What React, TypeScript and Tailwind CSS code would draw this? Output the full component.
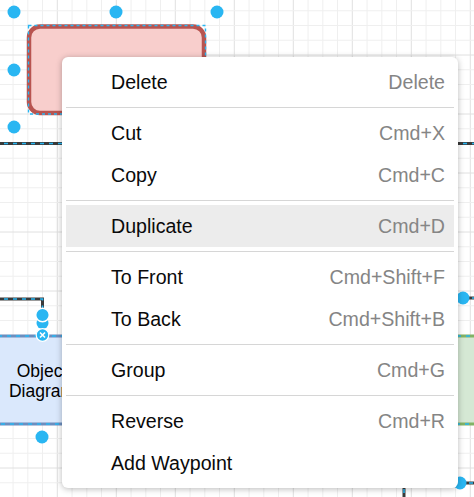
import React from 'react'

type Item = { label: string; shortcut?: string; active?: boolean }

const groups: Item[][] = [
  [{ label: 'Delete', shortcut: 'Delete' }],
  [
    { label: 'Cut', shortcut: 'Cmd+X' },
    { label: 'Copy', shortcut: 'Cmd+C' },
  ],
  [{ label: 'Duplicate', shortcut: 'Cmd+D', active: true }],
  [
    { label: 'To Front', shortcut: 'Cmd+Shift+F' },
    { label: 'To Back', shortcut: 'Cmd+Shift+B' },
  ],
  [{ label: 'Group', shortcut: 'Cmd+G' }],
  [
    { label: 'Reverse', shortcut: 'Cmd+R' },
    { label: 'Add Waypoint' },
  ],
]

const BLUE = '#29b6f2'

function Handle({ x, y }: { x: number; y: number }) {
  return <circle cx={x} cy={y} r={6.5} fill={BLUE} />
}

// dark edge with the blue dashed selection overlay
function Edge({ d }: { d: string }) {
  return (
    <g fill="none">
      <path d={d} stroke="#3a3a3a" strokeWidth={3} />
      <path d={d} stroke={BLUE} strokeWidth={1.6} strokeDasharray="4 5" />
    </g>
  )
}

function Canvas() {
  const minor = 14.75
  const lines: React.ReactNode[] = []
  for (let k = -4; k < 34; k++) {
    const x = 57.3 + k * minor
    const major = k % 4 === 0
    lines.push(
      <line key={'v' + k} x1={x} y1={0} x2={x} y2={497} stroke={major ? '#e0e0e0' : '#efefef'} strokeWidth={1} />
    )
  }
  for (let k = -4; k < 34; k++) {
    const y = 55 + k * minor
    const major = k % 4 === 0
    lines.push(
      <line key={'h' + k} x1={0} y1={y} x2={474} y2={y} stroke={major ? '#e0e0e0' : '#efefef'} strokeWidth={1} />
    )
  }

  return (
    <svg className="absolute inset-0" width={474} height={497} viewBox="0 0 474 497">
      <rect width={474} height={497} fill="#ffffff" />
      {lines}

      {/* pink shape, selected */}
      <rect x={29} y={26.5} width={175} height={86.5} rx={11} fill="#f8cecc" stroke="#b85450" strokeWidth={4.5} />
      <rect x={28.5} y={25.5} width={177} height={88.5} fill="none" stroke={BLUE} strokeWidth={1.4} strokeDasharray="3 3" />
      <Handle x={14} y={12} />
      <Handle x={116} y={12} />
      <Handle x={217} y={12} />
      <Handle x={14} y={70} />
      <Handle x={14} y={127} />
      <Handle x={116} y={127} />
      <Handle x={217} y={127} />

      <Edge d="M -5 143.5 H 480" />

      {/* left connector */}
      <Edge d="M -5 299 H 42.5 V 310" />

      {/* blue shape */}
      <rect x={-20} y={336} width={126} height={88} fill="#dae8fc" stroke="#6c8ebf" strokeWidth={3} />
      <rect x={-20} y={336} width={126} height={88} fill="none" stroke={BLUE} strokeWidth={1.6} strokeDasharray="4 5" />
      <text x={42} y={377} textAnchor="middle" fontFamily="'Liberation Sans', Arial, sans-serif" fontSize={17.5} fill="#000">
        Object
      </text>
      <text x={42} y={397} textAnchor="middle" fontFamily="'Liberation Sans', Arial, sans-serif" fontSize={17.5} fill="#000">
        Diagram
      </text>
      <circle cx={42.5} cy={323} r={6} fill={BLUE} />
      <circle cx={42.5} cy={315} r={6.8} fill={BLUE} stroke="#ffffff" strokeWidth={1.5} />
      <circle cx={42.5} cy={335} r={6.3} fill={BLUE} stroke="#ffffff" strokeWidth={1.2} />
      <path d="M 40 332.5 L 45 337.5 M 45 332.5 L 40 337.5" stroke="#ffffff" strokeWidth={1.6} />
      <Handle x={42} y={437} />

      {/* green shape */}
      <rect x={430} y={336} width={70} height={88} fill="#d5e8d4" stroke="#82b366" strokeWidth={3} />
      <rect x={430} y={336} width={70} height={88} fill="none" stroke={BLUE} strokeWidth={1.6} strokeDasharray="4 5" />
      <Edge d="M 463 298 H 480" />
      <Handle x={463} y={298} />
      <Edge d="M 460 483 H 480" />
      <Handle x={460} y={483} />
      <Edge d="M 404 480 V 500" />
    </svg>
  )
}

export default function App() {
  return (
    <div className="relative w-[474px] h-[497px] overflow-hidden bg-white font-['Liberation_Sans',Arial,sans-serif]">
      <Canvas />

      <div className="absolute left-[62px] top-[57px] w-[396px] rounded-[6px] bg-white py-[4px] shadow-[0_1px_6px_rgba(0,0,0,0.28)]">
        {groups.map((group, gi) => (
          <div key={gi}>
            {gi > 0 && <div className="mx-[4px] my-[4px] h-px bg-[#d6d6d6]" />}
            {group.map((item) => (
              <div
                key={item.label}
                className={
                  'mx-[4px] flex h-[42px] items-center justify-between pl-[45px] pr-[9px] pt-[2px] text-[19.6px] ' +
                  (item.active ? 'bg-[#ececec]' : '')
                }
              >
                <span className="text-[#0a0a0a]">{item.label}</span>
                {item.shortcut && <span className="text-[#858585]">{item.shortcut}</span>}
              </div>
            ))}
          </div>
        ))}
      </div>
    </div>
  )
}
